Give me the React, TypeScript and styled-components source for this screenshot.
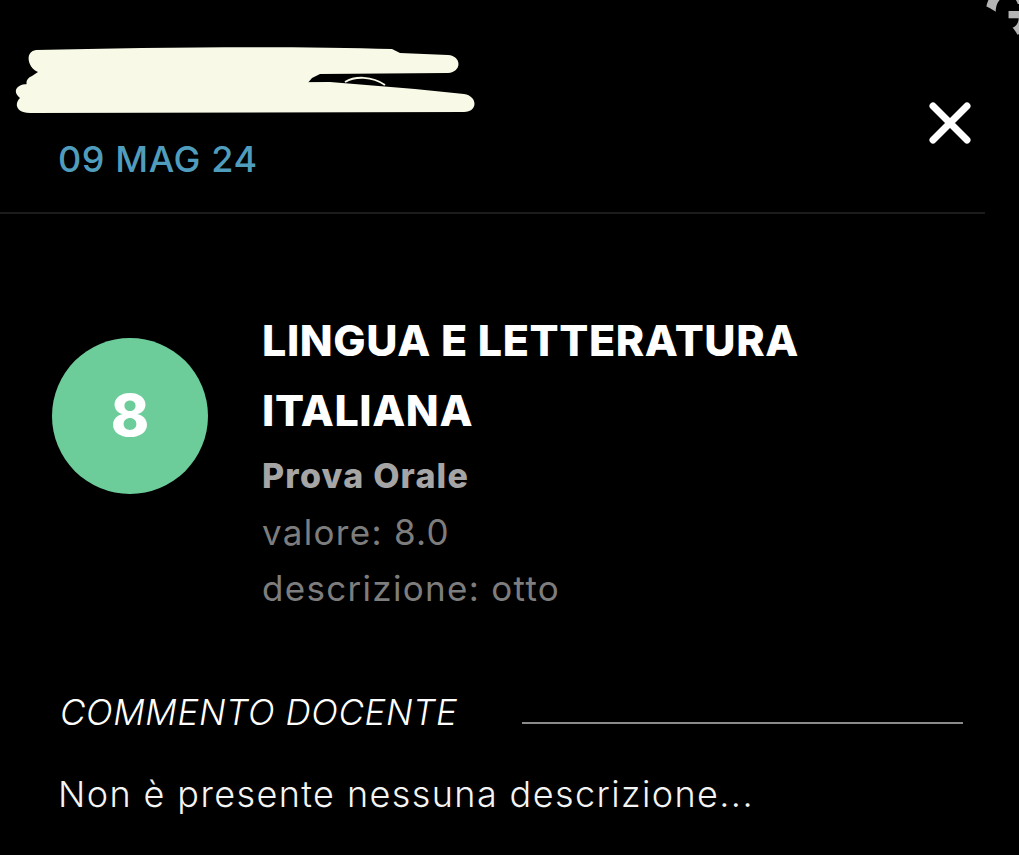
import React from "react";
import styled, { createGlobalStyle } from "styled-components";

const GlobalStyle = createGlobalStyle`
  html, body {
    margin: 0;
    padding: 0;
    background: #000;
  }
  body {
    font-family: "Inter", "Noto Sans", sans-serif;
    -webkit-font-smoothing: antialiased;
  }
`;

const Screen = styled.div`
  position: relative;
  width: 1019px;
  height: 855px;
  overflow: hidden;
  background: #000;
`;

const BehindGlyph = styled.span`
  position: absolute;
  top: -26px;
  right: -12px;
  font-family: "Inter", sans-serif;
  font-weight: 700;
  font-size: 64px;
  color: #b5b5b5;
  z-index: 0;
`;

const Sheet = styled.div`
  position: relative;
  z-index: 1;
  height: 100%;
  background: #000;
  border-top-right-radius: 70px;
  margin-right: -8px;
  display: flex;
  flex-direction: column;
`;

const Header = styled.header`
  display: flex;
  justify-content: space-between;
  align-items: flex-start;
  height: 212px;
  margin-right: 42px;
  border-bottom: 2px solid #1b1b1b;
`;

const HeaderLeft = styled.div`
  display: flex;
  flex-direction: column;
`;

const Redaction = styled.svg`
  display: block;
  width: 480px;
  height: 118px;
`;

const DateLabel = styled.div`
  margin: 21px 0 0 58px;
  font-size: 36px;
  line-height: 40px;
  font-weight: 500;
  color: #4f9cbd;
  letter-spacing: 0.6px;
`;

const CloseButton = styled.button`
  margin: 99px 11px 0 0;
  padding: 0;
  width: 48px;
  height: 48px;
  border: none;
  background: transparent;
  cursor: pointer;
  display: flex;
  align-items: center;
  justify-content: center;
`;

const GradeRow = styled.section`
  display: flex;
  align-items: flex-start;
  gap: 54px;
  margin-top: 91px;
  padding-left: 52px;
`;

const GradeCircle = styled.div`
  flex: none;
  margin-top: 33px;
  width: 156px;
  height: 156px;
  border-radius: 50%;
  background: #6ccd9b;
  display: flex;
  align-items: center;
  justify-content: center;
  color: #fff;
  font-weight: 800;
  font-size: 58px;
  line-height: 1;
  padding-bottom: 2px;
  box-sizing: border-box;
`;

const Details = styled.div`
  display: flex;
  flex-direction: column;
  width: 660px;
`;

const Subject = styled.h1`
  margin: 0;
  font-size: 43px;
  line-height: 70px;
  font-weight: 800;
  color: #fff;
  letter-spacing: 0.6px;
`;

const TestType = styled.div`
  margin-top: 3px;
  font-size: 34px;
  line-height: 56px;
  font-weight: 800;
  color: #a5a5a5;
  letter-spacing: 1.2px;
`;

const InfoLine = styled.div`
  font-size: 35px;
  line-height: 56px;
  font-weight: 400;
  color: #7d7d7d;
  letter-spacing: 1.3px;
`;

const CommentSection = styled.section`
  display: flex;
  flex-direction: column;
  margin-top: 76px;
  padding-left: 58px;
  margin-right: 64px;
`;

const CommentHeader = styled.div`
  display: flex;
  align-items: flex-end;
  justify-content: space-between;
`;

const CommentTitle = styled.h2`
  margin: 0 0 0 2px;
  font-size: 35px;
  line-height: 40px;
  font-weight: 300;
  font-style: italic;
  color: #fff;
  letter-spacing: 0.6px;
`;

const Rule = styled.div`
  width: 441px;
  height: 2px;
  margin-bottom: 8px;
  background: #8a8a8a;
`;

const CommentText = styled.p`
  margin: 40px 0 0;
  font-size: 36px;
  line-height: 44px;
  font-weight: 300;
  color: #f4f4f4;
  letter-spacing: 1.4px;
`;

function CloseIcon() {
  return (
    <svg width="48" height="48" viewBox="0 0 48 48">
      <path
        d="M7 7 L41 41 M41 7 L7 41"
        stroke="#fff"
        strokeWidth="7"
        strokeLinecap="round"
      />
    </svg>
  );
}

export default function App() {
  return (
    <>
      <GlobalStyle />
      <Screen>
        <BehindGlyph>G</BehindGlyph>
        <Sheet>
          <Header>
            <HeaderLeft>
              <Redaction viewBox="0 0 480 118">
                <path
                  d="M36 50 C150 47 300 46 392 49 L400 53 L448 55 C462 56 462 72 448 73 L320 74 L312 78 L300 92 L40 92 C26 92 22 80 32 76 L38 72 C28 68 24 52 36 50 Z"
                  fill="#f8f9e6"
                />
                <path
                  d="M28 84 L180 83 L330 82 L415 89 L464 94 C478 96 478 112 464 112 L30 113 C16 113 14 104 20 98 C12 92 16 84 28 84 Z"
                  fill="#f8f9e6"
                />
                <path
                  d="M345 82 C355 76 372 76 385 85"
                  stroke="#f8f9e6"
                  strokeWidth="2"
                  fill="none"
                />
              </Redaction>
              <DateLabel>09 MAG 24</DateLabel>
            </HeaderLeft>
            <CloseButton aria-label="Chiudi">
              <CloseIcon />
            </CloseButton>
          </Header>

          <GradeRow>
            <GradeCircle>8</GradeCircle>
            <Details>
              <Subject>LINGUA E LETTERATURA ITALIANA</Subject>
              <TestType>Prova Orale</TestType>
              <InfoLine>valore: 8.0</InfoLine>
              <InfoLine>descrizione: otto</InfoLine>
            </Details>
          </GradeRow>

          <CommentSection>
            <CommentHeader>
              <CommentTitle>COMMENTO DOCENTE</CommentTitle>
              <Rule />
            </CommentHeader>
            <CommentText>Non è presente nessuna descrizione...</CommentText>
          </CommentSection>
        </Sheet>
      </Screen>
    </>
  );
}
